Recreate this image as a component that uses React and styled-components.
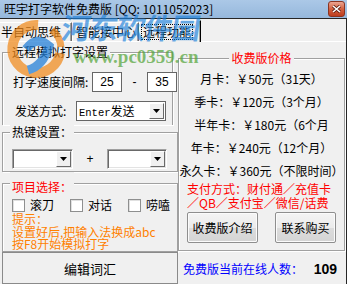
import React from 'react';
import styled, { createGlobalStyle } from 'styled-components';

const Global = createGlobalStyle`
  html, body { margin: 0; padding: 0; background: #f0f0f0; }
  body {
    font-family: "Noto Sans CJK SC", "Noto Sans", sans-serif;
    font-size: 12px;
    color: #000;
  }
`;

const Window = styled.div`
  position: relative;
  width: 347px;
  height: 284px;
  overflow: hidden;
  background: #f0f0f0;
  display: flex;
  flex-direction: column;
`;

const TitleBar = styled.div`
  flex: none;
  height: 18px;
  display: flex;
  align-items: center;
  justify-content: space-between;
  padding: 0 2px 0 4px;
  background: linear-gradient(#abc8e7, #96b8dc);
`;

const Title = styled.span`
  font-size: 12px;
  line-height: 18px;
  white-space: nowrap;
`;

const CloseBtn = styled.div`
  width: 17px;
  height: 16px;
  box-sizing: border-box;
  border: 1px solid #8a3422;
  border-radius: 3px;
  background: linear-gradient(#eba592, #d4603f 50%, #bd3d1f);
  display: flex;
  align-items: center;
  justify-content: center;
`;

const Client = styled.div`
  flex: 1;
  min-height: 0;
  display: flex;
  flex-direction: column;
  border-top: 1px solid #262626;
  border-right: 1px solid #262626;
`;

const TabStrip = styled.div`
  flex: none;
  height: 22px;
  display: flex;
  align-items: flex-end;
`;

const Tab = styled.div`
  box-sizing: border-box;
  width: ${p => p.$w}px;
  height: 19px;
  padding-left: ${p => p.$pl}px;
  border-top: 1px solid #fff;
  border-left: ${p => (p.$first ? 'none' : '1px solid #fff')};
  border-right: 1px solid #696969;
  box-shadow: inset -1px 0 0 #a0a0a0;
  line-height: 17px;
  white-space: nowrap;
  overflow: hidden;
`;

const ActiveTab = styled.div`
  position: relative;
  z-index: 1;
  box-sizing: border-box;
  width: 62px;
  height: 22px;
  margin-bottom: -1px;
  padding: 2px 0 0 1px;
  background: #f0f0f0;
  border-top: 1px solid #fff;
  border-left: 1px solid #fff;
  border-right: 1px solid #000;
  box-shadow: inset -1px 0 0 #a0a0a0;
`;

const Focus = styled.span`
  display: inline-block;
  outline: 1px dotted #000;
  outline-offset: -1px;
  padding: 0 2px;
  line-height: 16px;
  white-space: nowrap;
`;

const TabPage = styled.div`
  flex: 1;
  min-height: 0;
  display: grid;
  grid-template-columns: 178px 1fr;
  border-top: 1px solid #fff;
`;

const LeftCol = styled.div`
  display: flex;
  flex-direction: column;
  padding-left: 2px;
`;

const Group = styled.fieldset`
  box-sizing: border-box;
  margin: ${p => p.$mt || 0}px ${p => p.$mr || 0}px 0 0;
  padding: 0 0 ${p => p.$pb || 0}px 0;
  min-width: 0;
  width: ${p => (p.$w ? `${p.$w}px` : 'auto')};
  height: ${p => (p.$h ? `${p.$h}px` : 'auto')};
  border: 1px solid #a0a0a0;
  border-bottom: ${p => (p.$open ? 'none' : '1px solid #a0a0a0')};
  box-shadow: inset 1px 1px 0 #fff, 1px 1px 0 #fff;
  display: flex;
  flex-direction: column;
`;

const Legend = styled.legend`
  margin: 0 ${p => (p.$center ? 'auto' : '0')} 0 ${p => (p.$center ? 'auto' : '7px')};
  padding: ${p => p.$pt || 0}px 2px 0 2px;
  line-height: 14px;
  font-size: 12px;
  color: ${p => p.$color || '#000'};
  background: #f0f0f0;
  white-space: nowrap;
`;

const FieldRow = styled.div`
  display: flex;
  align-items: center;
  height: 20px;
  margin-top: ${p => p.$mt}px;
  padding-left: ${p => p.$pl}px;
`;

const Label = styled.span`
  flex: none;
  width: ${p => p.$w}px;
  font-size: 12px;
  line-height: 14px;
  white-space: nowrap;
`;

const NumBox = styled.div`
  flex: none;
  box-sizing: border-box;
  width: 30px;
  height: 20px;
  border: 1px solid #666;
  background: #fff;
  font-family: "Liberation Sans", Arial, sans-serif;
  font-size: 12px;
  line-height: 18px;
  text-align: center;
`;

const Sep = styled.span`
  flex: none;
  width: ${p => p.$w}px;
  text-align: center;
  font-family: "Liberation Sans", Arial, sans-serif;
  font-size: 12px;
  line-height: 14px;
`;

const Combo = styled.div`
  flex: none;
  box-sizing: border-box;
  width: ${p => p.$w}px;
  height: 20px;
  background: #fff;
  display: flex;
  padding: 1px;
  border: 1px solid;
  border-color: ${p => (p.$sunken ? '#a0a0a0 #fff #fff #a0a0a0' : '#666')};
  box-shadow: ${p => (p.$sunken ? 'inset 1px 1px 0 #696969, inset -1px -1px 0 #e3e3e3' : 'none')};
`;

const ComboText = styled.div`
  flex: 1;
  padding-left: 1px;
  font-size: 12px;
  line-height: 16px;
  white-space: nowrap;
  overflow: hidden;
`;

const Mono = styled.span`
  font-family: "Liberation Mono", "Courier New", monospace;
  font-size: 10.5px;
`;

const DropBtn = styled.div`
  flex: none;
  box-sizing: border-box;
  width: 15px;
  background: #f0f0f0;
  border: 1px solid;
  border-color: #fff #696969 #696969 #fff;
  display: flex;
  align-items: center;
  justify-content: center;
`;

const Arrow = () => (
  <svg width="7" height="4" viewBox="0 0 7 4">
    <path d="M0 0h7L3.5 4z" fill="#000" />
  </svg>
);

const ComboBox = ({ w, sunken, children }) => (
  <Combo $w={w} $sunken={sunken}>
    <ComboText>{children}</ComboText>
    <DropBtn><Arrow /></DropBtn>
  </Combo>
);

const CheckRow = styled.div`
  display: flex;
  align-items: center;
  gap: 16px;
  margin-top: 4px;
  padding-left: 9px;
`;

const CheckItem = styled.label`
  display: flex;
  align-items: center;
  gap: 5px;
  font-size: 12px;
  line-height: 14px;
`;

const Box = styled.span`
  flex: none;
  box-sizing: border-box;
  width: 13px;
  height: 13px;
  background: #fff;
  border: 1px solid #8e8f8f;
  box-shadow: inset 1px 1px 0 #e0e0e0;
`;

const Hint = styled.div`
  margin-top: 1px;
  padding-left: 9px;
  color: #ff8000;
  font-size: 12px;
  line-height: 12.5px;
  white-space: nowrap;
`;

const BigButton = styled.div`
  box-sizing: border-box;
  height: 32px;
  border: 1px solid #8a8a8a;
  background: #f0f0f0;
  display: flex;
  align-items: center;
  justify-content: center;
  font-size: 13px;
`;

const RightCol = styled.div`
  display: flex;
  flex-direction: column;
`;

const PriceRow = styled.div`
  height: 23px;
  line-height: 23px;
  text-align: center;
  font-size: 12px;
  white-space: nowrap;
  overflow: hidden;
  margin-top: ${p => p.$mt || 0}px;
`;

const PayText = styled.div`
  padding-left: 8px;
  color: #ff0000;
  font-size: 12px;
  line-height: 14px;
  white-space: nowrap;
`;

const ButtonRow = styled.div`
  display: flex;
  gap: 17px;
  margin-top: 2px;
  padding-left: 8px;
`;

const PushButton = styled.div`
  box-sizing: border-box;
  width: ${p => p.$w}px;
  height: 31px;
  border: 1px solid #8e8e8e;
  border-radius: 2px;
  background: linear-gradient(#f4f4f4, #ebebeb 50%, #dcdcdc 51%, #d4d4d4);
  box-shadow: inset 0 0 0 1px #fbfbfb;
  display: flex;
  align-items: center;
  justify-content: center;
  font-size: 12px;
  white-space: nowrap;
`;

const OnlineRow = styled.div`
  flex: 1;
  display: flex;
  align-items: center;
  justify-content: space-between;
  padding: 3px 9px 0 5px;
`;

const OnlineLabel = styled.span`
  color: #0000ff;
  font-size: 12px;
  line-height: 14px;
`;

const OnlineCount = styled.span`
  font-family: "Liberation Sans", Arial, sans-serif;
  font-weight: bold;
  font-size: 14px;
  line-height: 16px;
`;

const Watermark = styled.div`
  position: absolute;
  z-index: 5;
  left: 6px;
  top: 9px;
  width: 220px;
  display: flex;
  align-items: flex-start;
  pointer-events: none;
`;

const WmText = styled.div`
  display: flex;
  flex-direction: column;
  margin-left: -4px;
`;

const WmBig = styled.div`
  font-family: "Noto Sans CJK SC", sans-serif;
  font-weight: bold;
  font-size: 29px;
  line-height: 34px;
  letter-spacing: -1.5px;
  color: rgba(30, 130, 220, 0.66);
  transform: skewX(-8deg);
  white-space: nowrap;
`;

const WmUrl = styled.div`
  margin-top: 4px;
  padding-left: 11px;
  font-family: "Liberation Serif", serif;
  font-weight: bold;
  font-size: 19px;
  line-height: 20px;
  color: rgba(85, 165, 60, 0.72);
  white-space: nowrap;
`;

const Logo = () => (
  <svg width="60" height="68" viewBox="0 0 60 68" style={{ marginTop: 8, flex: 'none', opacity: 0.72 }}>
    <path d="M32 8 A24 24 0 1 0 54 36" fill="none" stroke="#f08a1c" strokeWidth="10" />
    <path d="M46 13 A24 24 0 0 1 55 30" fill="none" stroke="#f08a1c" strokeWidth="7" />
    <path d="M20 32 Q31 18 43 29 Q37 49 22 53" fill="none" stroke="#1e7dd7" strokeWidth="9" />
  </svg>
);

export default function App() {
  return (
    <>
      <Global />
      <Window>
        <TitleBar>
          <Title>旺宇打字软件免费版 [QQ: 1011052023]</Title>
          <CloseBtn>
            <svg width="9" height="8" viewBox="0 0 9 8">
              <path d="M1 1l7 6M8 1L1 7" stroke="#5a1a0e" strokeWidth="3" />
              <path d="M1 1l7 6M8 1L1 7" stroke="#fff" strokeWidth="1.6" />
            </svg>
          </CloseBtn>
        </TitleBar>
        <Client>
          <TabStrip>
            <Tab $w={72} $pl={1} $first>半自动思维</Tab>
            <Tab $w={67} $pl={3}>智能接中心</Tab>
            <ActiveTab><Focus>远程功能</Focus></ActiveTab>
          </TabStrip>
          <TabPage>
            <LeftCol>
              <Group $mt={3} $w={171} $h={80} $open>
                <Legend>远程模拟打字设置</Legend>
                <FieldRow $mt={13} $pl={10}>
                  <Label $w={79}>打字速度间隔:</Label>
                  <NumBox>25</NumBox>
                  <Sep $w={25}>-</Sep>
                  <NumBox>35</NumBox>
                </FieldRow>
                <FieldRow $mt={9} $pl={12}>
                  <Label $w={61}>发送方式:</Label>
                  <ComboBox w={90}><Mono>Enter</Mono>发送</ComboBox>
                </FieldRow>
              </Group>
              <Group $w={176} $pb={2}>
                <Legend>热键设置：</Legend>
                <FieldRow $mt={10} $pl={9}>
                  <ComboBox w={61} sunken />
                  <Sep $w={34}>+</Sep>
                  <ComboBox w={60} sunken />
                </FieldRow>
              </Group>
              <Group $w={176} $h={80}>
                <Legend $pt={8} $color="#ff0000">项目选择：</Legend>
                <CheckRow>
                  <CheckItem><Box />滚刀</CheckItem>
                  <CheckItem><Box />对话</CheckItem>
                  <CheckItem><Box />唠嗑</CheckItem>
                </CheckRow>
                <Hint>
                  提示：<br />
                  设置好后,把输入法换成abc<br />
                  按F8开始模拟打字
                </Hint>
              </Group>
              <BigButton>编辑词汇</BigButton>
            </LeftCol>
            <RightCol>
              <Group $mt={9} $mr={1} $pb={7}>
                <Legend $center $color="#ff0000">收费版价格</Legend>
                <PriceRow $mt={2}>月卡：￥50元（31天）</PriceRow>
                <PriceRow>季卡：￥120元（3个月）</PriceRow>
                <PriceRow>半年卡：￥180元（6个月</PriceRow>
                <PriceRow>年卡：￥240元（12个月）</PriceRow>
                <PriceRow>永久卡：￥360元（不限时间）</PriceRow>
                <PayText>
                  支付方式：财付通／充值卡<br />
                  ／QB／支付宝／微信/话费
                </PayText>
                <ButtonRow>
                  <PushButton $w={71}>收费版介绍</PushButton>
                  <PushButton $w={61}>联系购买</PushButton>
                </ButtonRow>
              </Group>
              <OnlineRow>
                <OnlineLabel>免费版当前在线人数：</OnlineLabel>
                <OnlineCount>109</OnlineCount>
              </OnlineRow>
            </RightCol>
          </TabPage>
        </Client>
        <Watermark>
          <Logo />
          <WmText>
            <WmBig>河东软件园</WmBig>
            <WmUrl>www.pc0359.cn</WmUrl>
          </WmText>
        </Watermark>
      </Window>
    </>
  );
}
